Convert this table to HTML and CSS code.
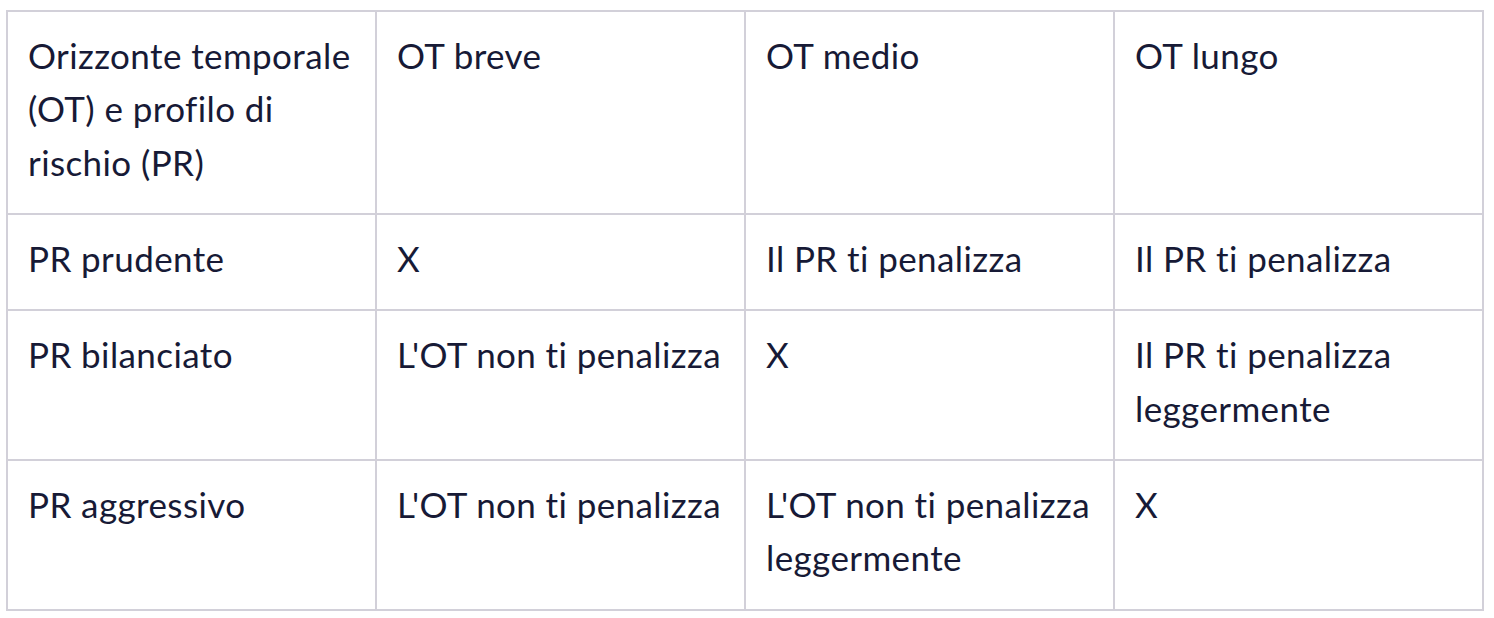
FILE: index.html
```html
<!DOCTYPE html>
<html lang="it">
<head>
<meta charset="utf-8">
<link rel="stylesheet" href="styles.css">
</head>
<body>
<table class="grid">
  <tr>
    <td>Orizzonte temporale (OT) e profilo di rischio (PR)</td>
    <td>OT breve</td>
    <td>OT medio</td>
    <td>OT lungo</td>
  </tr>
  <tr>
    <td>PR prudente</td>
    <td>X</td>
    <td>Il PR ti penalizza</td>
    <td>Il PR ti penalizza</td>
  </tr>
  <tr>
    <td>PR bilanciato</td>
    <td>L'OT non ti penalizza</td>
    <td>X</td>
    <td>Il PR ti penalizza leggermente</td>
  </tr>
  <tr>
    <td>PR aggressivo</td>
    <td>L'OT non ti penalizza</td>
    <td>L'OT non ti penalizza leggermente</td>
    <td>X</td>
  </tr>
</table>
</body>
</html>
```
FILE: styles.css
```css
html, body {
  margin: 0;
  background: #ffffff;
}
body {
  padding: 10px 10px 0 6px;
}
.grid {
  border-collapse: collapse;
  table-layout: fixed;
  width: 1478px;
  font-family: Lato, "Noto Sans", sans-serif;
  font-size: 35px;
  letter-spacing: 0.4px;
  line-height: 53.33px;
  color: #171a36;
}
.grid td {
  border: 2px solid #d2d0d9;
  padding: 17px 20px 24px 20px;
  vertical-align: top;
  text-align: left;
}
```
